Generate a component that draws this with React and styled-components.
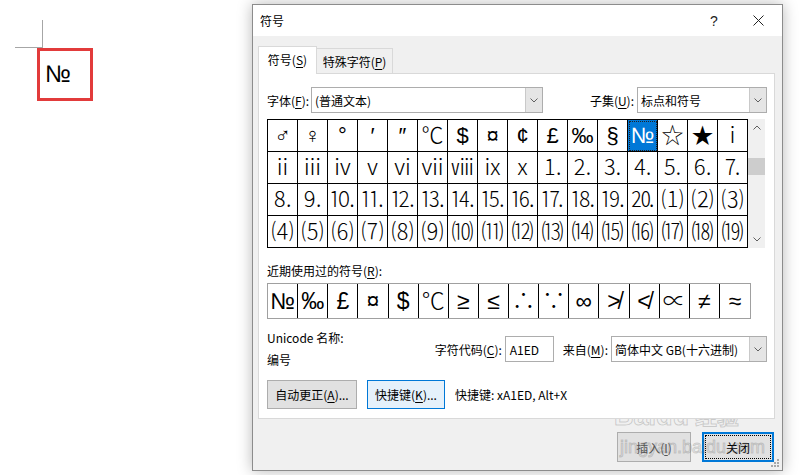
import styled, { createGlobalStyle } from "styled-components";

const GlobalStyle = createGlobalStyle`
  html, body {
    margin: 0;
    padding: 0;
    background: #fff;
  }
  body {
    width: 800px;
    height: 475px;
    overflow: hidden;
    font-family: "Noto Sans CJK SC", "Liberation Sans", sans-serif;
    font-size: 12px;
    color: #000;
  }
  * {
    box-sizing: border-box;
  }
`;

const Page = styled.div`
  position: relative;
  display: flex;
  width: 800px;
  height: 475px;
`;

const DocArea = styled.div`
  width: 252px;
  padding: 20px 0 0 15px;
`;

const CropMark = styled.div`
  width: 28px;
  height: 28px;
  border-right: 1px solid #a6a6a6;
  border-bottom: 1px solid #a6a6a6;
`;

const Highlight = styled.div`
  width: 56px;
  height: 53px;
  margin-left: 22px;
  border: 3px solid #e23b3b;
  padding: 9px 0 0 5px;
  font-family: "Liberation Sans", "Noto Sans CJK SC", sans-serif;
  font-size: 24px;
  font-weight: 300;
  line-height: 28px;
`;

const Dialog = styled.div`
  position: relative;
  margin-top: 4px;
  width: 531px;
  height: 467px;
  border: 1px solid #8c8c8c;
  box-shadow: 0 0 14px rgba(0, 0, 0, 0.28);
  background: #f0f0f0;
  display: flex;
  flex-direction: column;
`;

const TitleBar = styled.div`
  height: 31px;
  background: #fff;
  display: flex;
  align-items: center;
  padding-left: 7px;
`;

const Title = styled.div`
  flex: 1;
`;

const TitleButton = styled.div`
  width: 44px;
  height: 30px;
  display: flex;
  align-items: center;
  justify-content: center;
  font-family: "Liberation Sans", sans-serif;
  font-size: 14px;
  color: #222;
  margin-right: ${(p) => (p.$last ? "2px" : "0")};
`;

const Body = styled.div`
  flex: 1;
  padding: 10px 7px 0 5px;
`;

const Tabs = styled.div`
  display: flex;
  align-items: flex-end;
  height: 27px;
`;

const Tab = styled.div`
  position: relative;
  z-index: ${(p) => (p.$active ? 2 : 1)};
  height: ${(p) => (p.$active ? "28px" : "25px")};
  width: ${(p) => p.$w}px;
  margin-bottom: ${(p) => (p.$active ? "-1px" : "0")};
  background: ${(p) => (p.$active ? "#fff" : "#f0f0f0")};
  border: 1px solid #d9d9d9;
  border-bottom: none;
  border-left: ${(p) => (p.$active ? "1px solid #d9d9d9" : "none")};
  display: flex;
  align-items: center;
  justify-content: center;
  padding-bottom: ${(p) => (p.$active ? "2px" : "0")};
`;

const Key = styled.span`
  text-decoration: underline;
  text-underline-offset: 2px;
`;

const Panel = styled.div`
  position: relative;
  z-index: 1;
  width: 517px;
  height: 346px;
  background: #fff;
  border: 1px solid #d9d9d9;
  padding: 13px 7px 0 8px;
  display: flex;
  flex-direction: column;
`;

const Row = styled.div`
  display: flex;
  align-items: center;
  justify-content: space-between;
`;

const Field = styled.div`
  display: flex;
  align-items: center;
`;

const Label = styled.span`
  width: ${(p) => (p.$w ? `${p.$w}px` : "auto")};
  margin-right: ${(p) => p.$gap ?? 3}px;
  white-space: nowrap;
`;

const Combo = styled.div`
  width: ${(p) => p.$w}px;
  height: 26px;
  border: 1px solid #adadad;
  background: #fff;
  display: flex;
  align-items: stretch;
`;

const ComboText = styled.div`
  flex: 1;
  padding-left: 3px;
  display: flex;
  align-items: center;
  white-space: nowrap;
`;

const ComboArrow = styled.div`
  width: 17px;
  background: #e5e5e5;
  border-left: 1px solid #c9c9c9;
  display: flex;
  align-items: center;
  justify-content: center;
`;

const GridWrap = styled.div`
  display: flex;
  margin-top: 6px;
`;

const SymbolGrid = styled.div`
  width: 481px;
  display: grid;
  grid-template-columns: repeat(16, 1fr);
  grid-auto-rows: 32px;
  border-top: 1px solid #000;
  border-left: 1px solid #000;
`;

const Cell = styled.div`
  border-right: 1px solid #000;
  border-bottom: 1px solid #000;
  display: flex;
  align-items: center;
  justify-content: center;
  overflow: hidden;
  font-family: "Liberation Sans", "Noto Sans CJK SC", sans-serif;
  font-size: 22px;
  font-weight: 300;
  line-height: 1;
  white-space: nowrap;
  background: ${(p) => (p.$selected ? "#0078d7" : "transparent")};
  color: ${(p) => (p.$selected ? "#fff" : "#000")};
  outline: ${(p) => (p.$selected ? "1px dotted #222" : "none")};
  outline-offset: -2px;
`;

const Scrollbar = styled.div`
  width: 17px;
  height: 129px;
  background: #f0f0f0;
  display: flex;
  flex-direction: column;
`;

const ScrollArrow = styled.div`
  height: 17px;
  display: flex;
  align-items: center;
  justify-content: center;
`;

const Track = styled.div`
  flex: 1;
`;

const Thumb = styled.div`
  margin-top: 22px;
  height: 17px;
  background: #cdcdcd;
`;

const SectionLabel = styled.div`
  margin-top: 15px;
  line-height: 16px;
`;

const RecentRow = styled.div`
  margin-top: 4px;
  width: 484px;
  height: 36px;
  border: 1px solid #a0a0a0;
  display: grid;
  grid-template-columns: repeat(16, 1fr);
`;

const RecentCell = styled.div`
  border-right: ${(p) => (p.$last ? "none" : "1px solid #000")};
  display: flex;
  align-items: center;
  justify-content: center;
  overflow: hidden;
  font-family: "Liberation Sans", "Noto Sans CJK SC", sans-serif;
  font-size: 23px;
  font-weight: 300;
  line-height: 1;
  white-space: nowrap;
`;

const InfoRow = styled(Row)`
  margin-top: 11px;
`;

const InfoText = styled.div`
  display: flex;
  flex-direction: column;
  gap: 6px;
  line-height: 16px;
`;

const CodeInput = styled.div`
  width: 49px;
  height: 26px;
  border: 1px solid #adadad;
  padding-left: 4px;
  display: flex;
  align-items: center;
  margin-right: 9px;
`;

const ButtonRow = styled.div`
  display: flex;
  align-items: center;
  gap: 10px;
  margin-top: 12px;
`;

const Button = styled.div`
  width: ${(p) => p.$w}px;
  height: ${(p) => p.$h || 29}px;
  display: flex;
  align-items: center;
  justify-content: center;
  background: ${(p) => (p.$hover ? "#e5f1fb" : "#e1e1e1")};
  border: ${(p) =>
    p.$default ? "2px solid #0078d7" : p.$hover ? "1px solid #0078d7" : "1px solid #adadad"};
  color: ${(p) => (p.$disabled ? "#555" : "#000")};
  white-space: nowrap;
`;

const FocusRing = styled.span`
  display: flex;
  align-items: center;
  justify-content: center;
  width: calc(100% - 4px);
  height: calc(100% - 4px);
  outline: 1px dotted #000;
`;

const Footer = styled.div`
  display: flex;
  justify-content: flex-end;
  gap: 11px;
  padding: 13px 1px 0 0;
`;

const Grip = styled.svg`
  position: absolute;
  right: 2px;
  bottom: 2px;
`;

const Watermark = styled.div`
  position: absolute;
  left: 614px;
  top: 383px;
  display: flex;
  flex-direction: column;
  align-items: flex-start;
  color: transparent;
  -webkit-text-stroke: 1px rgba(90, 90, 90, 0.26);
  pointer-events: none;
  font-family: "Liberation Sans", "Noto Sans CJK SC", sans-serif;
`;

const MarkLine = styled.div`
  display: flex;
  align-items: flex-end;
  font-size: ${(p) => p.$size}px;
  font-weight: ${(p) => (p.$bold ? "bold" : "normal")};
  line-height: 1;
  margin-left: ${(p) => p.$indent || 0}px;
  margin-top: ${(p) => p.$top || 0}px;
`;

const MarkStack = styled.span`
  display: flex;
  flex-direction: column;
  align-items: center;
`;

const MarkCjk = styled.span`
  font-size: 22px;
  margin-left: 6px;
  padding-bottom: 2px;
`;

const Chevron = ({ up }) => (
  <svg width="8" height="5" viewBox="0 0 8 5">
    <polyline
      points={up ? "0.5,4.5 4,1 7.5,4.5" : "0.5,0.5 4,4 7.5,0.5"}
      fill="none"
      stroke="#606060"
      strokeWidth="1"
    />
  </svg>
);

const symbols = [
  "♂", "♀", "°", "′", "″", "℃", "$", "¤", "¢", "£", "‰", "§", "№", "☆", "★", "ⅰ",
  "ⅱ", "ⅲ", "ⅳ", "ⅴ", "ⅵ", "ⅶ", "ⅷ", "ⅸ", "ⅹ", "⒈", "⒉", "⒊", "⒋", "⒌", "⒍", "⒎",
  "⒏", "⒐", "⒑", "⒒", "⒓", "⒔", "⒕", "⒖", "⒗", "⒘", "⒙", "⒚", "⒛", "⑴", "⑵", "⑶",
  "⑷", "⑸", "⑹", "⑺", "⑻", "⑼", "⑽", "⑾", "⑿", "⒀", "⒁", "⒂", "⒃", "⒄", "⒅", "⒆",
];

const recent = ["№", "‰", "£", "¤", "$", "℃", "≥", "≤", "∴", "∵", "∞", "≯", "≮", "∝", "≠", "≈"];

function App() {
  return (
    <>
      <GlobalStyle />
      <Page>
        <DocArea>
          <CropMark />
          <Highlight>№</Highlight>
        </DocArea>

        <Dialog>
          <TitleBar>
            <Title>符号</Title>
            <TitleButton>?</TitleButton>
            <TitleButton $last>
              <svg width="11" height="11" viewBox="0 0 11 11">
                <path d="M0.5 0.5 L10.5 10.5 M10.5 0.5 L0.5 10.5" stroke="#222" strokeWidth="1" />
              </svg>
            </TitleButton>
          </TitleBar>

          <Body>
            <Tabs>
              <Tab $active $w={59}>
                符号(<Key>S</Key>)
              </Tab>
              <Tab $w={76}>
                特殊字符(<Key>P</Key>)
              </Tab>
            </Tabs>

            <Panel>
              <Row>
                <Field>
                  <Label $w={44} $gap={0}>
                    字体(<Key>F</Key>):
                  </Label>
                  <Combo $w={232}>
                    <ComboText>(普通文本)</ComboText>
                    <ComboArrow>
                      <Chevron />
                    </ComboArrow>
                  </Combo>
                </Field>
                <Field>
                  <Label>
                    子集(<Key>U</Key>):
                  </Label>
                  <Combo $w={130}>
                    <ComboText>标点和符号</ComboText>
                    <ComboArrow>
                      <Chevron />
                    </ComboArrow>
                  </Combo>
                </Field>
              </Row>

              <GridWrap>
                <SymbolGrid>
                  {symbols.map((s, i) => (
                    <Cell key={i} $selected={i === 12}>
                      {s}
                    </Cell>
                  ))}
                </SymbolGrid>
                <Scrollbar>
                  <ScrollArrow>
                    <Chevron up />
                  </ScrollArrow>
                  <Track>
                    <Thumb />
                  </Track>
                  <ScrollArrow>
                    <Chevron />
                  </ScrollArrow>
                </Scrollbar>
              </GridWrap>

              <SectionLabel>
                近期使用过的符号(<Key>R</Key>):
              </SectionLabel>
              <RecentRow>
                {recent.map((s, i) => (
                  <RecentCell key={i} $last={i === recent.length - 1}>
                    {s}
                  </RecentCell>
                ))}
              </RecentRow>

              <InfoRow>
                <InfoText>
                  <span>Unicode 名称:</span>
                  <span>编号</span>
                </InfoText>
                <Field>
                  <Label>
                    字符代码(<Key>C</Key>):
                  </Label>
                  <CodeInput>A1ED</CodeInput>
                  <Label>
                    来自(<Key>M</Key>):
                  </Label>
                  <Combo $w={156}>
                    <ComboText>简体中文 GB(十六进制)</ComboText>
                    <ComboArrow>
                      <Chevron />
                    </ComboArrow>
                  </Combo>
                </Field>
              </InfoRow>

              <ButtonRow>
                <Button $w={90}>
                  自动更正(<Key>A</Key>)...
                </Button>
                <Button $w={78} $hover>
                  快捷键(<Key>K</Key>)...
                </Button>
                <span>快捷键: xA1ED, Alt+X</span>
              </ButtonRow>
            </Panel>

            <Footer>
              <Button $w={74} $h={30} $disabled>
                插入(<Key>I</Key>)
              </Button>
              <Button $w={72} $h={30} $default>
                <FocusRing>关闭</FocusRing>
              </Button>
            </Footer>
          </Body>

          <Grip width="10" height="10" viewBox="0 0 10 10">
            {[
              [8, 2], [8, 5], [5, 5], [8, 8], [5, 8], [2, 8],
            ].map(([x, y], i) => (
              <rect key={i} x={x - 1} y={y - 1} width="2" height="2" fill="#a8a8a8" />
            ))}
          </Grip>
        </Dialog>

        <Watermark>
          <MarkLine $size={27} $bold>
            Bai
            <MarkStack>
              <svg width="30" height="20" viewBox="0 0 30 20">
                <g fill="none" stroke="rgba(90,90,90,0.26)" strokeWidth="1">
                  <ellipse cx="9" cy="4" rx="2.5" ry="3" />
                  <ellipse cx="17" cy="3" rx="2.5" ry="3" />
                  <ellipse cx="24" cy="8" rx="2.5" ry="3" />
                  <ellipse cx="4" cy="10" rx="2.5" ry="3" />
                  <path d="M7 19 C7 13 11 10 14 10 C18 10 22 14 22 17 C22 20 9 21 7 19 Z" />
                </g>
              </svg>
              du
            </MarkStack>
            <MarkCjk>经验</MarkCjk>
          </MarkLine>
          <MarkLine $size={18} $indent={6} $top={8}>
            jingyan.baidu.com
          </MarkLine>
        </Watermark>
      </Page>
    </>
  );
}

export default App;
